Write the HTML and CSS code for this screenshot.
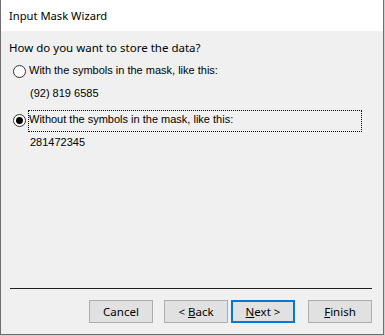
FILE: index.html
```html
<!DOCTYPE html>
<html lang="en">
<head>
  <meta charset="UTF-8" />
  <meta name="viewport" content="width=device-width, initial-scale=1.0" />
  <title>Input Mask Wizard</title>
  <link rel="stylesheet" href="styles.css">
</head>
<body>
  <div class="window">
    <div class="titlebar">Input Mask Wizard</div>

    <div class="content">
      <p class="question">How do you want to store the data?</p>

      <label class="option">
        <span class="radio"></span>
        <span class="option-text">With the symbols in the mask, like this:</span>
      </label>
      <div class="sample">(92) 819 6585</div>

      <label class="option option-second">
        <span class="radio checked"></span>
        <span class="option-text focused">Without the symbols in the mask, like this:</span>
      </label>
      <div class="sample">281472345</div>
    </div>

    <div class="footer">
      <div class="separator"></div>
      <div class="buttons">
        <button class="btn">Cancel</button>
        <button class="btn btn-back">&lt; <u>B</u>ack</button>
        <button class="btn btn-default"><u>N</u>ext &gt;</button>
        <button class="btn btn-finish"><u>F</u>inish</button>
      </div>
    </div>
  </div>
</body>
</html>
```

FILE: styles.css
```css
body {
  margin: 0;
  background: #cfcfcf;
  font-family: "Noto Sans", "Open Sans", sans-serif;
  font-size: 11.5px;
  color: #000;
}
.window {
  width: 384px;
  height: 335px;
  box-sizing: border-box;
  border: 1px solid #6e6e6e;
  border-top: none;
  background: #f0f0f0;
  display: flex;
  flex-direction: column;
}
.titlebar {
  height: 31px;
  line-height: 32px;
  padding-left: 8px;
  background: #fff;
  font-size: 11.2px;
}
.content {
  padding: 0 8px;
}
.question {
  margin: 9px 0 0;
  line-height: 16px;
}
.option {
  display: flex;
  align-items: flex-start;
  margin-top: 5px;
  margin-left: 4px;
}
.option-second {
  margin-top: 9px;
}
.radio {
  width: 13px;
  height: 13px;
  box-sizing: border-box;
  border: 1px solid #333;
  border-radius: 50%;
  background: #fff;
  position: relative;
  margin-top: 4px;
  flex: none;
}
.radio.checked::after {
  content: "";
  position: absolute;
  left: 2px;
  top: 2px;
  width: 7px;
  height: 7px;
  border-radius: 50%;
  background: #000;
}
.option-text,
.sample {
  font-family: "Liberation Sans", Arial, sans-serif;
  font-size: 11px;
}
.option-text {
  margin-left: 2px;
  padding: 0 0 4px;
  line-height: 16px;
  border: 1px dotted transparent;
}
.focused {
  border-color: #000;
  width: 334px;
  box-sizing: border-box;
}
.sample {
  margin: 2px 0 0 21px;
  line-height: 16px;
}
.footer {
  margin-top: auto;
  padding: 0 11px 11px 9px;
}
.separator {
  height: 1px;
  background: #202020;
  margin-bottom: 11px;
}
.buttons {
  display: flex;
  justify-content: flex-end;
}
.btn {
  width: 64px;
  height: 23px;
  box-sizing: border-box;
  font: inherit;
  background: #e1e1e1;
  border: 1px solid #adadad;
  padding: 0;
  margin-left: 12px;
}
.btn-back {
  margin-left: 11px;
}
.btn-default {
  margin-left: 3px;
  border: 2px solid #0078d7;
}
.btn-finish {
  margin-left: 13px;
}
```
